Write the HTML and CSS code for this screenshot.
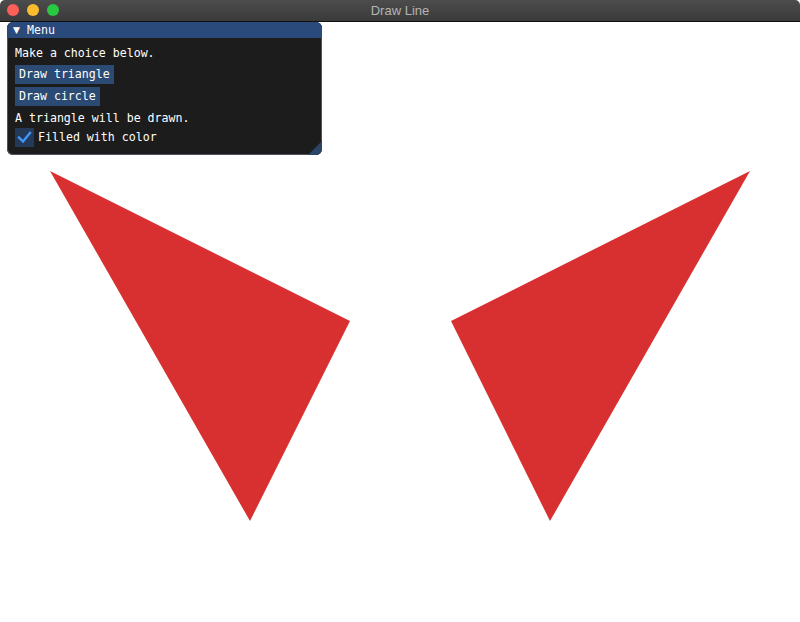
FILE: index.html
```html
<!DOCTYPE html>
<html>
<head>
<meta charset="utf-8">
<link rel="stylesheet" href="styles.css">
</head>
<body>
<div class="app">
  <div class="titlebar">
    <div class="lights">
      <span class="light red"></span>
      <span class="light yellow"></span>
      <span class="light green"></span>
    </div>
    <div class="title">Draw Line</div>
  </div>
  <div class="canvas">
    <svg class="shapes" width="800" height="600" viewBox="0 22 800 600">
      <polygon points="50,171 350,321 250,521" fill="#d83030"/>
      <polygon points="750,171 451,321 550,521" fill="#d83030"/>
    </svg>
    <div class="imgui">
      <div class="imgui-title"><span class="arrow">▼</span>Menu</div>
      <div class="imgui-body">
        <div class="text first">Make a choice below.</div>
        <div class="btn">Draw triangle</div>
        <div class="btn btn2">Draw circle</div>
        <div class="text t2">A triangle will be drawn.</div>
        <div class="check-row">
          <span class="checkbox">
            <svg width="19" height="19" viewBox="0 0 19 19"><polyline points="4,9.5 8,13.5 15,5" fill="none" stroke="#4296fa" stroke-width="2.4" stroke-linecap="square"/></svg>
          </span>
          <span class="label">Filled with color</span>
        </div>
      </div>
      <div class="grip"></div>
    </div>
  </div>
</div>
</body>
</html>
```
FILE: styles.css
```css
html, body {
  margin: 0;
  padding: 0;
  background: #ffffff;
}
.app {
  width: 800px;
  height: 622px;
  overflow: hidden;
  display: flex;
  flex-direction: column;
}
.titlebar {
  height: 21px;
  flex: 0 0 21px;
  background: linear-gradient(#4c4c4c, #3a3a3a);
  border-bottom: 1px solid #101010;
  border-radius: 5px 5px 0 0;
  position: relative;
  display: flex;
  align-items: center;
  justify-content: center;
}
.lights {
  position: absolute;
  left: 7px;
  top: 4px;
  display: flex;
  gap: 8px;
}
.light {
  width: 12px;
  height: 12px;
  border-radius: 50%;
  display: block;
}
.red { background: #fc5f57; }
.yellow { background: #fdbc2e; }
.green { background: #28c840; }
.title {
  font-family: "Liberation Sans", Arial, sans-serif;
  font-size: 13px;
  color: #b4b4b4;
}
.canvas {
  position: relative;
  flex: 1;
  background: #ffffff;
}
.shapes {
  display: block;
}
.imgui {
  position: absolute;
  left: 7px;
  top: 0;
  width: 315px;
  height: 133px;
  background: #1c1c1c;
  border-radius: 6px;
  box-shadow: 0 0 0 1px #505060 inset;
  overflow: hidden;
  font-family: "DejaVu Sans Mono", "Liberation Mono", monospace;
  font-size: 11.6px;
  color: #ffffff;
}
.imgui-title {
  height: 16px;
  background: #294a7a;
  display: flex;
  align-items: center;
  padding-left: 6px;
  line-height: 16px;
}
.arrow {
  font-size: 9px;
  width: 14px;
  display: inline-block;
  font-family: "DejaVu Sans", sans-serif;
}
.imgui-body {
  padding: 0 8px;
  display: flex;
  flex-direction: column;
  align-items: flex-start;
}
.text {
  height: 16px;
  line-height: 16px;
}
.first {
  margin-top: 7px;
}
.btn {
  margin-top: 4px;
  height: 19px;
  line-height: 19px;
  padding: 0 4px;
  background: #2c4b74;
}
.btn2 {
  margin-top: 3px;
}
.t2 {
  margin-top: 4px;
}
.check-row {
  margin-top: 2px;
  display: flex;
  align-items: center;
  gap: 4px;
  height: 19px;
}
.checkbox {
  width: 19px;
  height: 19px;
  background: #243858;
  display: block;
}
.checkbox svg {
  display: block;
}
.label {
  line-height: 19px;
}
.grip {
  position: absolute;
  right: 0;
  bottom: 0;
  width: 0;
  height: 0;
  border-left: 14px solid transparent;
  border-bottom: 14px solid #2a4568;
}
```
